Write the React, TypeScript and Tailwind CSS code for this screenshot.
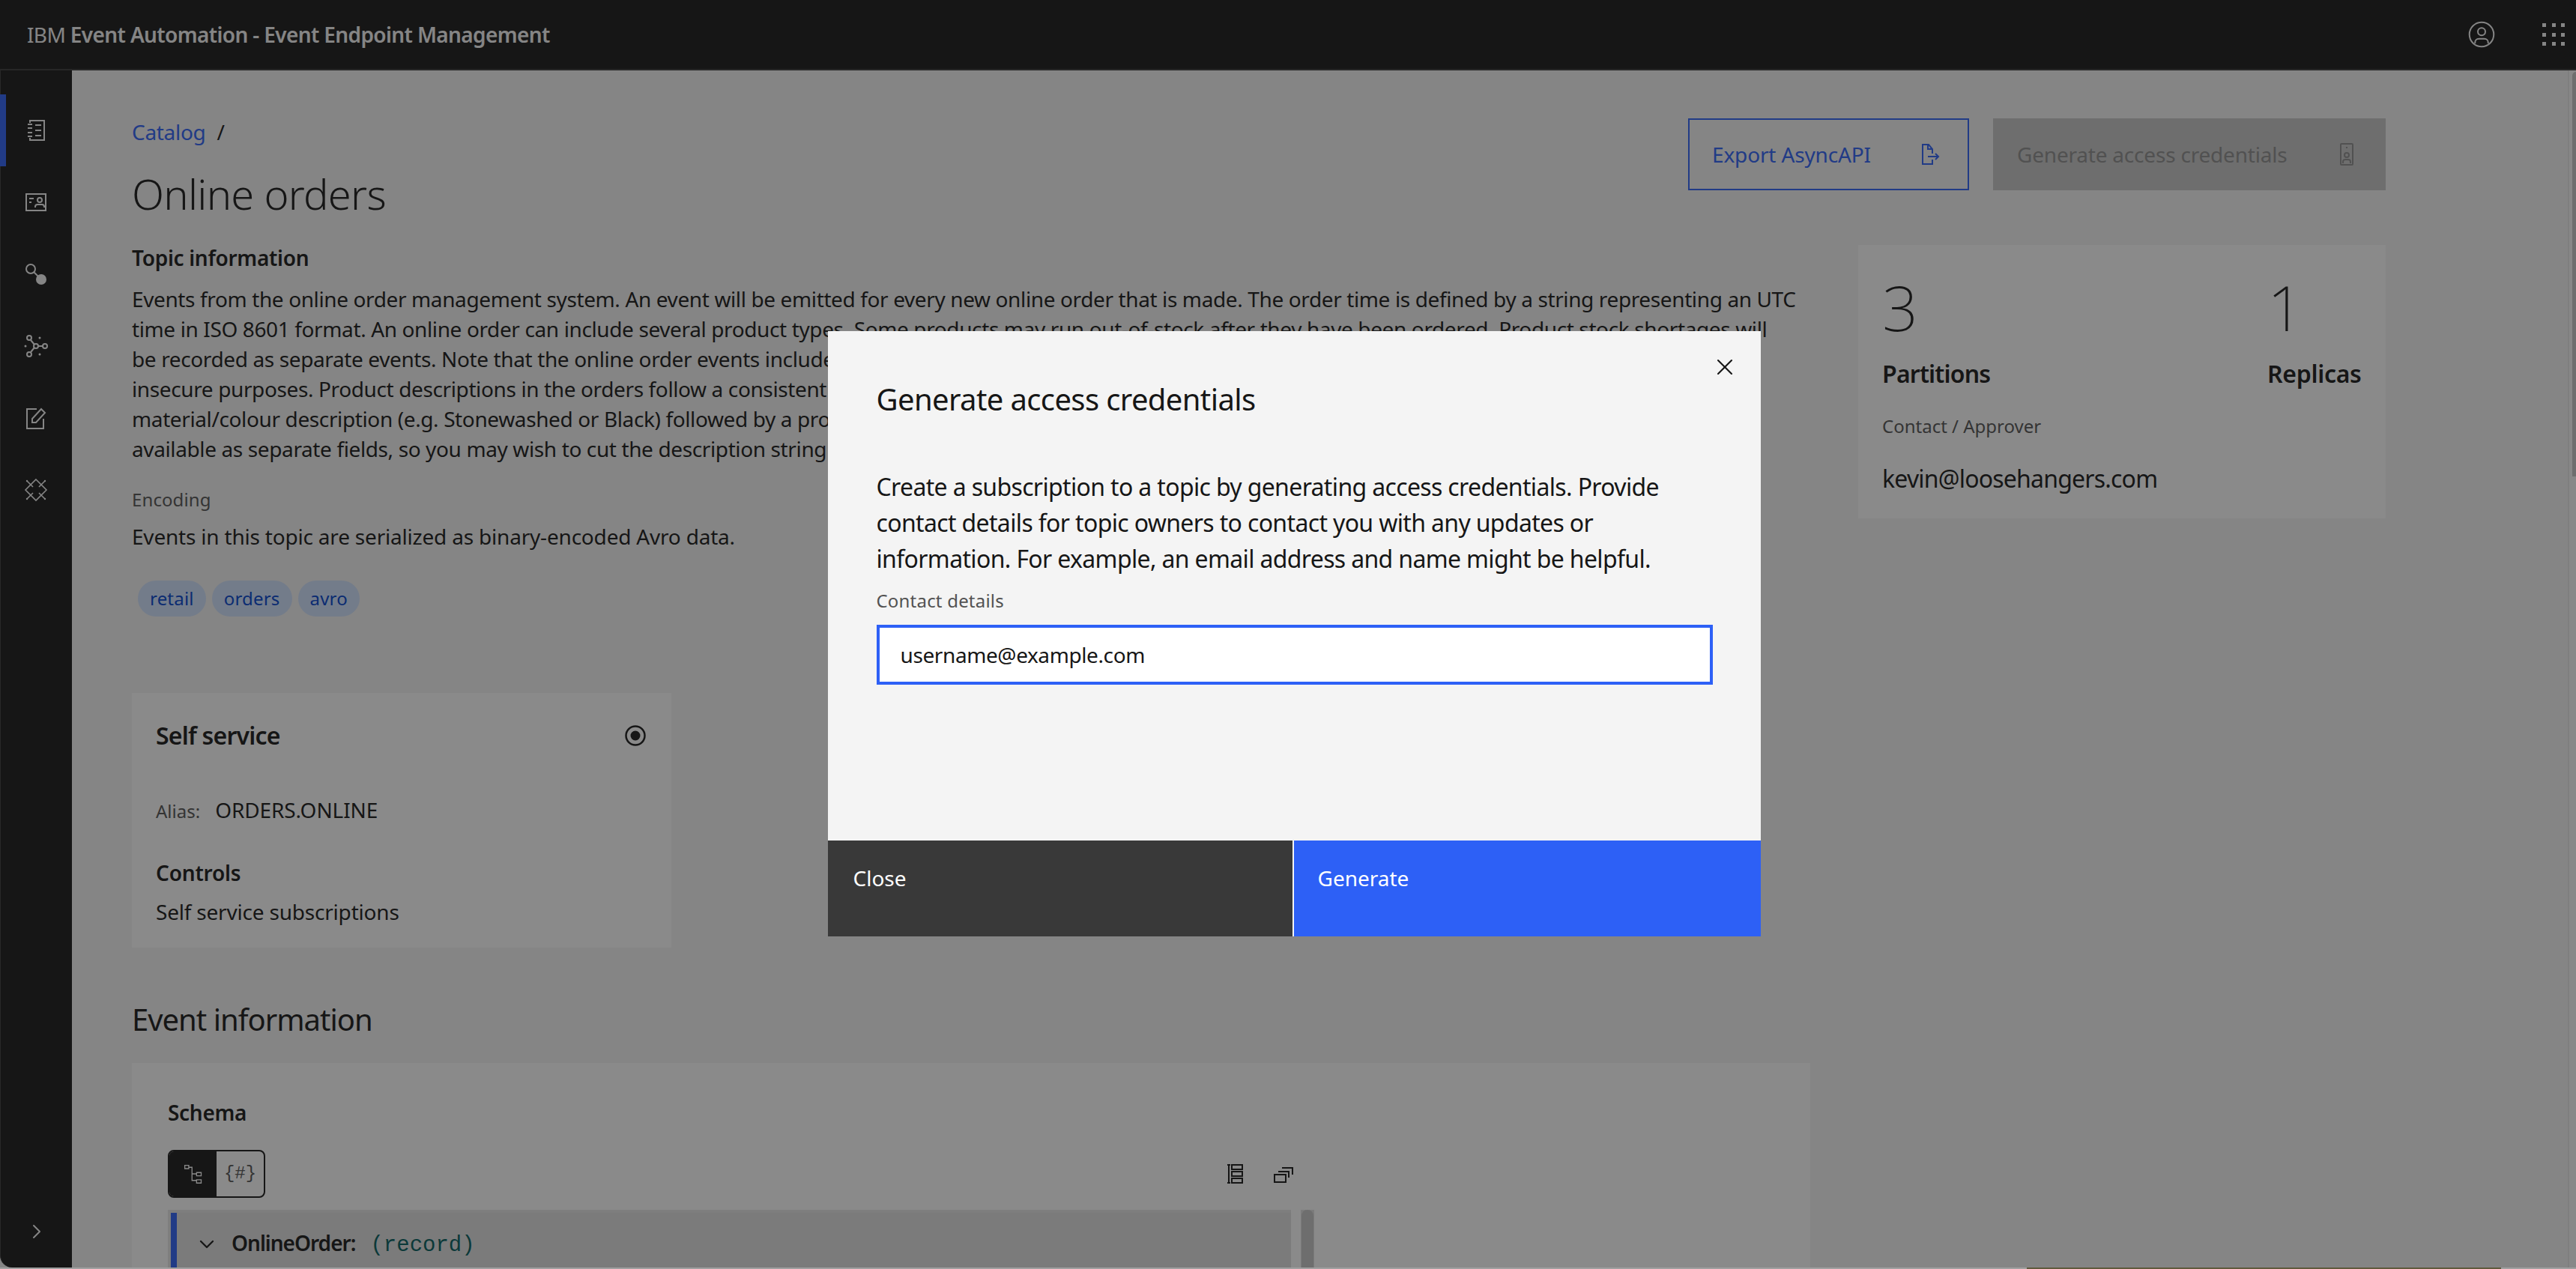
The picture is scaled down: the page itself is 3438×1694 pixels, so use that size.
import { ChevronDown, ChevronRight, X } from "lucide-react"

// Icons are Carbon-style: 32 box, 2px stroke.
function Icon({ children, className = "w-8 h-8" }: { children: React.ReactNode; className?: string }) {
  return (
    <svg viewBox="0 0 32 32" fill="none" stroke="currentColor" strokeWidth="2" className={className}>
      {children}
    </svg>
  )
}

const navIcons = [
  <>
    <path d="M8 6V3h19v26H8v-3" />
    <path d="M5 8h6M5 13h6M5 19h6M5 24h6M15 9h8M15 16h8M15 23h8" />
  </>,
  <>
    <rect x="3" y="5" width="26" height="22" />
    <path d="M7 11h6M7 16h3" />
    <circle cx="21" cy="13" r="3" />
    <path d="M15 23v-1a3 3 0 0 1 3-3h6a3 3 0 0 1 3 3v1" />
  </>,
  <>
    <circle cx="9" cy="9" r="6" />
    <path d="M13 13l6 6" />
    <circle cx="23" cy="23" r="7" fill="currentColor" stroke="none" />
  </>,
  <>
    <circle cx="16" cy="16" r="3" />
    <circle cx="7" cy="5" r="3" />
    <circle cx="7" cy="27" r="3" />
    <circle cx="28" cy="16" r="3" />
    <path d="M9 8l5 6M9 24l5-6M19 16h6" />
    <circle cx="2" cy="16" r="1.5" fill="currentColor" stroke="none" />
    <circle cx="21" cy="5" r="1.5" fill="currentColor" stroke="none" />
    <circle cx="21" cy="27" r="1.5" fill="currentColor" stroke="none" />
  </>,
  <>
    <path d="M17 4H4v26h22V17" />
    <path d="M11 22v-5L23 4l5 5-12 13z" />
  </>,
  <>
    <path strokeWidth="1.6" d="M16 2l14 14-14 14L2 16z" />
    <path strokeWidth="1.6" d="M4 4l8 8M28 4l-8 8M4 28l8-8M28 28l-8-8" />
    <circle cx="4" cy="4" r="1.2" fill="currentColor" stroke="none" />
    <circle cx="28" cy="4" r="1.2" fill="currentColor" stroke="none" />
    <circle cx="4" cy="28" r="1.2" fill="currentColor" stroke="none" />
    <circle cx="28" cy="28" r="1.2" fill="currentColor" stroke="none" />
  </>,
]

function NavRail() {
  return (
    <nav className="w-[96px] shrink-0 bg-[#161616] text-[#f4f4f4] flex flex-col pt-[32px] relative border-l border-[#3a3a3a] rounded-bl-[16px]">
      {navIcons.map((icon, i) => (
        <div
          key={i}
          className={`h-[96px] flex items-center justify-center -ml-px border-l-8 pr-2 ${i === 0 ? "border-[#2d60f6]" : "border-transparent"}`}
        >
          <Icon>{icon}</Icon>
        </div>
      ))}
      <div className="mt-auto mb-[32px] flex justify-center">
        <ChevronRight className="w-8 h-8" strokeWidth={1.5} />
      </div>
    </nav>
  )
}

function Line({ children }: { children: React.ReactNode }) {
  return <div className="whitespace-nowrap">{children}</div>
}

function Tag({ children }: { children: React.ReactNode }) {
  return (
    <span className="h-[48px] px-[16px] rounded-full bg-[#d0e2ff] text-[#0043ce] text-[24px] leading-[48px] tracking-[0.2px]">
      {children}
    </span>
  )
}

function Schema() {
  return (
    <section className="bg-white h-[320px] pl-[48px] pt-[46px]">
      <h4 className="text-[28px] leading-[40px] font-semibold tracking-[-0.3px]">Schema</h4>
      <div className="w-[1530px] mt-[30px] flex items-center justify-between">
        <div className="w-[130px] h-[64px] flex rounded-lg border-2 border-[#161616] overflow-hidden">
          <div className="w-[63px] bg-[#161616] text-white flex items-center justify-center">
            <Icon className="w-7 h-7">
              <path strokeWidth="1.5" d="M3 3h6v5H3zM21 14h7v5h-7zM21 25h7v5h-7zM9 6h5v20h7M14 16h7" />
            </Icon>
          </div>
          <div className="flex-1 flex items-center justify-center text-[24px] text-[#525252] font-['Liberation_Mono',monospace]">
            {"{#}"}
          </div>
        </div>
        <div className="flex items-center gap-[31px] mr-[25px]">
          <Icon>
            <path d="M6 4v24M4 4h4M4 28h4M10 4h14v6H10zM10 13h14v6H10zM10 22h14v6H10z" />
          </Icon>
          <Icon>
            <path d="M4 17h15v10H4zM9 13h14v8M14 8h14v9" />
          </Icon>
        </div>
      </div>
      <div className="flex mt-[16px] w-[1530px]">
        <div className="w-[1501px] h-[80px] pt-[4px] bg-[#e7e7e7]">
          <div className="h-full bg-[#e0e0e0] ml-[4px] border-l-8 border-[#2d60f6] pl-[24px] flex items-center gap-[17px] pt-[8px]">
            <ChevronDown className="w-8 h-8" strokeWidth={1.75} />
            <span className="text-[28px] font-semibold tracking-[-1px]">
              OnlineOrder:
              <span className="ml-[20px] text-[29px] font-normal tracking-normal text-[#005d5d] font-['Liberation_Mono',monospace]">(record)</span>
            </span>
          </div>
        </div>
        <div className="ml-[13px] w-[18px] h-[80px] bg-[#e0e0e0]">
          <div className="w-[16px] mx-auto h-full rounded-t-full bg-[#c6c6c6]" />
        </div>
      </div>
    </section>
  )
}

function Dialog() {
  return (
    <div className="w-[1245px] h-[808px] bg-[#f4f4f4] text-[#161616] flex flex-col relative">
      <button className="absolute right-[28px] top-[28px] w-[40px] h-[40px] flex items-center justify-center">
        <X className="w-[36px] h-[36px]" strokeWidth={1.4} />
      </button>
      <div className="flex-1 px-[65px] pt-[66px]">
        <h3 className="text-[40px] leading-[50px] tracking-[-0.62px]">Generate access credentials</h3>
        <p className="mt-[68px] text-[32px] leading-[48px] tracking-[-0.65px]">
          <Line>Create a subscription to a topic by generating access credentials. Provide</Line>
          <Line>contact details for topic owners to contact you with any updates or</Line>
          <Line>information. For example, an email address and name might be helpful.</Line>
        </p>
        <label className="block mt-[16px] text-[24px] leading-[32px] text-[#525252] tracking-[0.2px]">Contact details</label>
        <div className="mt-[16px] w-[1116px] h-[80px] bg-white border-4 border-[#2d60f6] pl-[28px] text-[28px] leading-[72px] tracking-[-0.4px]">
          username@example.com
        </div>
      </div>
      <div className="h-[128px] grid grid-cols-[620px_1fr] text-white text-[28px]">
        <button className="bg-[#393939] text-left pl-[34px] pb-[28px]">Close</button>
        <button className="bg-[#2d60f6] border-l-2 border-[#f4f4f4] text-left pl-[32px] pb-[28px]">Generate</button>
      </div>
    </div>
  )
}

export default function App() {
  return (
    <div className="relative h-[1694px] w-[3438px] overflow-hidden bg-[#f4f4f4] text-[#161616] font-['Noto_Sans',sans-serif]">
      <header className="h-[94px] bg-[#161616] border-b-2 border-[#393939] pl-[36px] pr-[15px] flex items-center justify-between text-[#f4f4f4]">
        <div className="text-[28px] tracking-[-0.63px]">
          IBM <span className="font-semibold">Event Automation - Event Endpoint Management</span>
        </div>
        <div className="flex items-center gap-[61px]">
          <Icon className="w-10 h-10">
            <circle cx="16" cy="16" r="13" strokeWidth="1.6" />
            <circle cx="16" cy="13" r="4" strokeWidth="1.6" />
            <path strokeWidth="1.6" d="M9 25.5v-1a4 4 0 0 1 4-4h6a4 4 0 0 1 4 4v1" />
          </Icon>
          <div className="grid grid-cols-3 gap-x-[7.5px] gap-y-[7.5px]">
            {Array.from({ length: 9 }, (_, i) => (
              <span key={i} className="w-[5px] h-[5px] bg-[#f4f4f4]" />
            ))}
          </div>
        </div>
      </header>

      <div className="flex h-[1598px]">
        <NavRail />
        <main className="flex-1 pl-[80px] pr-[254px] pt-[62px] relative">
          <div className="flex justify-between items-start">
            <div>
              <div className="text-[28px] leading-[40px] tracking-[-0.3px] text-[#2d60f6]">
                Catalog <span className="ml-[8px] text-[#161616]">/</span>
              </div>
              <h1 className="mt-[22px] text-[56px] leading-[80px] font-light tracking-[-0.7px]">Online orders</h1>
            </div>
            <div className="flex gap-[32px] mt-[2px]">
              <button className="w-[375px] h-[96px] border-2 border-[#2d60f6] text-[#2d60f6] text-[28px] pl-[30px] pr-[34px] flex items-center justify-between tracking-[-0.15px]">
                Export AsyncAPI
                <Icon>
                  <path d="M19 23V29H6V3h8l5 6v6M13 3v6h6M13 19h14M23 15l4 4-4 4" />
                </Icon>
              </button>
              <button className="w-[524px] h-[96px] bg-[#c6c6c6] text-[#8d8d8d] text-[28px] pl-[32px] pr-[36px] flex items-center justify-between tracking-[-0.2px]">
                Generate access credentials
                <Icon>
                  <rect x="8" y="2" width="16" height="28" rx="1" />
                  <circle cx="16" cy="17" r="3" />
                  <path d="M11 28v-2a3 3 0 0 1 3-3h4a3 3 0 0 1 3 3v2M15 7h2" />
                </Icon>
              </button>
            </div>
          </div>

          <div className="flex justify-between items-start mt-[26px]">
            <div className="w-[2240px]">
              <h4 className="text-[28px] leading-[40px] font-semibold tracking-[-0.3px]">Topic information</h4>
              <div className="mt-[15px] text-[28px] leading-[40px] tracking-[-0.38px]">
                <Line>Events from the online order management system. An event will be emitted for every new online order that is made. The order time is defined by a string representing an UTC</Line>
                <Line>time in ISO 8601 format. An online order can include several product types. Some products may run out-of-stock after they have been ordered. Product stock shortages will</Line>
                <Line>be recorded as separate events. Note that the online order events include customer and payment details generated only for test use and not suitable for</Line>
                <Line>insecure purposes. Product descriptions in the orders follow a consistent pattern: each one starts with the product size, followed by a</Line>
                <Line>material/colour description (e.g. Stonewashed or Black) followed by a product type and name, though these details are not</Line>
                <Line>available as separate fields, so you may wish to cut the description string into parts.</Line>
              </div>
              <div className="mt-[32px] text-[24px] leading-[32px] text-[#525252] tracking-[0.1px]">Encoding</div>
              <div className="mt-[13px] text-[28px] leading-[40px] tracking-[-0.2px]">
                Events in this topic are serialized as binary-encoded Avro data.
              </div>
              <div className="mt-[39px] ml-[8px] flex gap-[8px]">
                <Tag>retail</Tag>
                <Tag>orders</Tag>
                <Tag>avro</Tag>
              </div>
              <div className="mt-[102px] w-[720px] h-[340px] bg-white px-[32px] pt-[35px]">
                <div className="flex justify-between items-center">
                  <h3 className="text-[32px] leading-[44px] font-semibold tracking-[-0.8px]">Self service</h3>
                  <svg viewBox="0 0 32 32" className="w-8 h-8">
                    <circle cx="16" cy="16" r="12.5" fill="none" stroke="#161616" strokeWidth="2.5" />
                    <circle cx="16" cy="16" r="6.5" fill="#161616" />
                  </svg>
                </div>
                <div className="mt-[56px] flex items-baseline gap-[20px]">
                  <span className="text-[24px] text-[#525252]">Alias:</span>
                  <span className="text-[28px] tracking-[-0.1px]">ORDERS.ONLINE</span>
                </div>
                <div className="mt-[43px] text-[28px] leading-[40px] font-semibold tracking-[-0.2px]">Controls</div>
                <div className="mt-[12px] text-[28px] leading-[40px] tracking-[-0.2px]">Self service subscriptions</div>
              </div>
            </div>
            <aside className="w-[704px] h-[365px] mt-[3px] bg-white px-[32px] pt-[28px]">
              <div className="flex">
                <div className="w-[514px]">
                  <div className="text-[84px] leading-[110px] font-extralight">3</div>
                  <div className="mt-[12px] text-[32px] leading-[44px] font-semibold tracking-[-0.8px]">Partitions</div>
                </div>
                <div>
                  <div className="text-[84px] leading-[110px] font-extralight">1</div>
                  <div className="mt-[12px] text-[32px] leading-[44px] font-semibold tracking-[-0.3px]">Replicas</div>
                </div>
              </div>
              <div className="mt-[32px] text-[24px] leading-[32px] text-[#525252]">Contact / Approver</div>
              <div className="mt-[32px] text-[32px] leading-[44px] tracking-[-0.8px]">kevin@loosehangers.com</div>
            </aside>
          </div>

          <h2 className="mt-[70px] text-[40px] leading-[52px] tracking-[-1px]">Event information</h2>
          <div className="mt-[32px] w-[2240px]">
            <Schema />
          </div>

          {/* page scrollbar */}
          <div className="absolute right-0 top-0 bottom-0 w-[11px] border-l-2 border-[#e8e8e8] bg-[#fafafa]">
            <div className="ml-auto w-[5px] h-[540px] mt-[2px] rounded-tl-full bg-[#c6c6c6]" />
          </div>
        </main>
      </div>

      {/* overlay and dialog */}
      <div className="absolute inset-0 bg-[#161616]/50 flex items-center justify-center pl-[16px] pb-[2px]">
        <Dialog />
      </div>

      {/* window edge at the very bottom of the capture */}
      <div className="absolute left-0 right-0 bottom-0 h-[2px] bg-[#a0a0a0]">
        <div className="ml-[2705px] w-[633px] h-full bg-[#5f5a3d]" />
      </div>
    </div>
  )
}
